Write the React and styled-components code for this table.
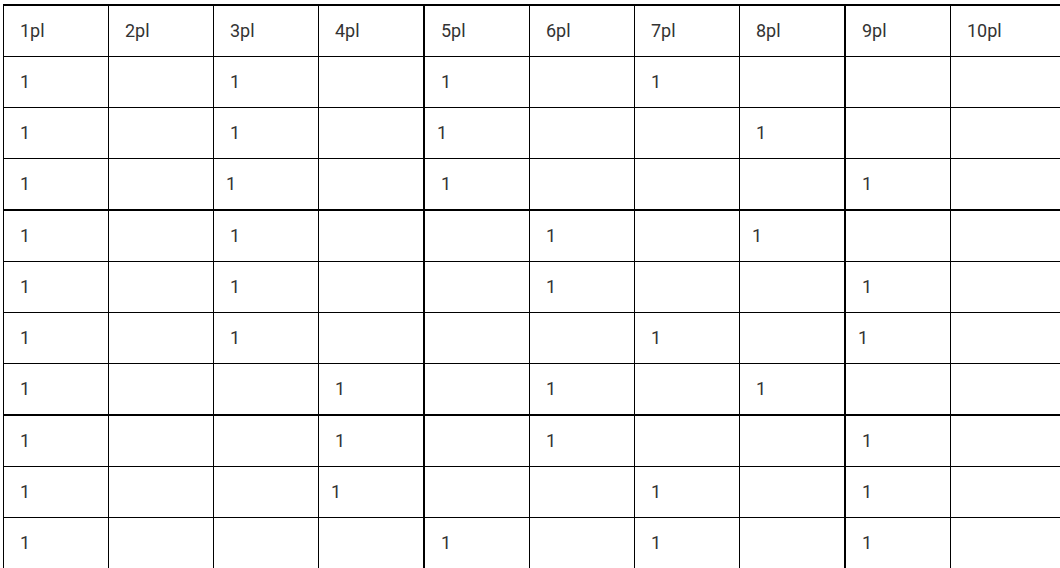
import React from "react";
import styled, { createGlobalStyle } from "styled-components";

const Global = createGlobalStyle`
  html, body {
    margin: 0;
    padding: 0;
    background: #ffffff;
    overflow: hidden;
  }
  body {
    font-family: Roboto, "Noto Sans", "Liberation Sans", sans-serif;
  }
`;

const Page = styled.div`
  padding: 4px 0 0 3px;
  width: 1100px;
`;

const Grid = styled.table`
  border-collapse: collapse;
  table-layout: fixed;
  width: 1077px;
  border-top: 2px solid #000;
  border-left: 1px solid #000;
`;

const Col = styled.col`
  width: ${(p) => p.$w}px;
`;

const Row = styled.tr`
  height: ${(p) => p.$h}px;
  border-bottom: ${(p) => (p.$thick ? 2 : 1)}px solid #000;
`;

const Cell = styled.td`
  padding: 0 0 0 ${(p) => (p.$shift ? 12 : 16)}px;
  border-right: ${(p) => (p.$thick ? 2 : 1)}px solid #000;
  font-size: 18px;
  line-height: 22px;
  color: #333;
  vertical-align: middle;
  text-align: left;
  white-space: nowrap;
`;

const HeadCell = styled(Cell).attrs({ as: "th" })`
  font-weight: 400;
`;

const headers = ["1pl", "2pl", "3pl", "4pl", "5pl", "6pl", "7pl", "8pl", "9pl", "10pl"];

// columns (1-based) holding a "1" in each row
const rows = [
  [1, 3, 5, 7],
  [1, 3, 5, 8],
  [1, 3, 5, 9],
  [1, 3, 6, 8],
  [1, 3, 6, 9],
  [1, 3, 7, 9],
  [1, 4, 6, 8],
  [1, 4, 6, 9],
  [1, 4, 7, 9],
  [1, 5, 7, 9],
];

// cells whose text sits a few pixels further left
const shifted = new Set(["2-5", "3-3", "4-8", "6-9", "9-4"]);

const thickCol = (c) => c === 4 || c === 8;
const thickRow = (r) => r === 3 || r === 7;

// a thick rule takes one extra pixel, shared by the two tracks beside it
const colWidth = (c) => (c === 10 ? 130 : thickCol(c) || thickCol(c - 1) ? 105.5 : 105);
const rowHeight = (r) => (thickRow(r) || thickRow(r - 1) ? 51.5 : 51);

export default function App() {
  return (
    <Page>
      <Global />
      <Grid>
        <colgroup>
          {headers.map((h, i) => (
            <Col key={h} $w={colWidth(i + 1)} />
          ))}
        </colgroup>
        <thead>
          <Row $h={51}>
            {headers.map((h, i) => (
              <HeadCell key={h} $thick={thickCol(i + 1)}>
                {h}
              </HeadCell>
            ))}
          </Row>
        </thead>
        <tbody>
          {rows.map((cols, r) => (
            <Row key={r} $h={rowHeight(r + 1)} $thick={thickRow(r + 1)}>
              {headers.map((h, c) => {
                const col = c + 1;
                const has = cols.includes(col);
                return (
                  <Cell
                    key={h}
                    $thick={thickCol(col)}
                    $shift={shifted.has(`${r + 1}-${col}`)}
                  >
                    {has ? "1" : ""}
                  </Cell>
                );
              })}
            </Row>
          ))}
        </tbody>
      </Grid>
    </Page>
  );
}
